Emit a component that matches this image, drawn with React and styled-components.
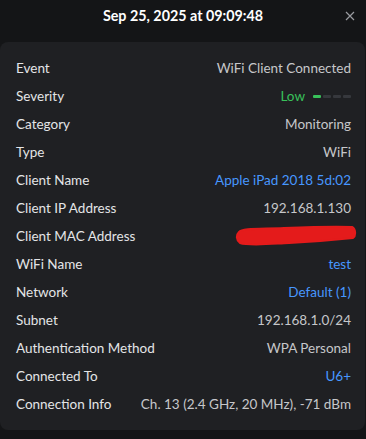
import React from 'react';
import styled, { createGlobalStyle } from 'styled-components';

const GlobalStyle = createGlobalStyle`
  html, body {
    margin: 0;
    padding: 0;
    background: #141517;
  }
  body {
    font-family: Lato, "Noto Sans", sans-serif;
  }
`;

const Page = styled.div`
  width: 366px;
  height: 439px;
  background: #141517;
  display: flex;
  flex-direction: column;
  overflow: hidden;
`;

const Header = styled.div`
  height: 42px;
  display: flex;
  align-items: flex-start;
  justify-content: center;
  position: relative;
`;

const Title = styled.div`
  margin-top: 6px;
  color: #ffffff;
  font-family: Lato, sans-serif;
  font-weight: 700;
  font-size: 14.3px;
  line-height: 20px;
`;

const Close = styled.button`
  position: absolute;
  right: 10px;
  top: 10px;
  width: 12px;
  height: 12px;
  padding: 0;
  border: 0;
  background: transparent;
  display: flex;
  align-items: center;
  justify-content: center;
`;

const Card = styled.div`
  margin: 0 1px 0 0;
  background: #1f2023;
  border-radius: 8px;
  padding: 12px 14px 12px 16px;
  display: flex;
  flex-direction: column;
`;

const Row = styled.div`
  height: 28px;
  display: flex;
  align-items: center;
  justify-content: space-between;
  font-size: 13.5px;
`;

const Label = styled.span`
  color: #e4e5e7;
  font-family: Lato, sans-serif;
`;

const Value = styled.span`
  color: ${(p) => (p.$tone === 'link' ? '#4797ff' : p.$tone === 'ok' ? '#38c15a' : '#c6c7ca')};
  font-family: Lato, sans-serif;
  display: flex;
  align-items: center;
`;

const Meter = styled.span`
  display: flex;
  gap: 2px;
  margin-left: 8px;
`;

const Seg = styled.span`
  width: 8px;
  height: 3px;
  border-radius: 1px;
  background: ${(p) => (p.$on ? '#38c15a' : '#36383d')};
`;

const rows = [
  ['Event', 'WiFi Client Connected'],
  ['Severity', 'Low', 'ok'],
  ['Category', 'Monitoring'],
  ['Type', 'WiFi'],
  ['Client Name', 'Apple iPad 2018 5d:02', 'link'],
  ['Client IP Address', '192.168.1.130'],
  ['Client MAC Address', null, 'redacted'],
  ['WiFi Name', 'test', 'link'],
  ['Network', 'Default (1)', 'link'],
  ['Subnet', '192.168.1.0/24'],
  ['Authentication Method', 'WPA Personal'],
  ['Connected To', 'U6+', 'link'],
  ['Connection Info', 'Ch. 13 (2.4 GHz, 20 MHz), -71 dBm'],
];

const Scribble = () => (
  <svg width="124" height="22" viewBox="0 0 124 22" style={{ marginRight: '-7px' }}>
    <path
      d="M5 7 C 8 3, 25 4, 50 3 S 100 1, 118 2 C 122 4, 122 11, 119 13 C 100 15, 75 17, 55 18 S 15 21, 6 18 C 2 15, 2 10, 5 7 Z"
      fill="#e41b1b"
      stroke="#e41b1b"
      strokeWidth="2"
      strokeLinejoin="round"
    />
  </svg>
);

export default function App() {
  return (
    <Page>
      <GlobalStyle />
      <Header>
        <Title>Sep 25, 2025 at 09:09:48</Title>
        <Close aria-label="close">
          <svg width="10" height="10" viewBox="0 0 10 10">
            <path d="M1 1 L9 9 M9 1 L1 9" stroke="#9a9ba0" strokeWidth="1.2" />
          </svg>
        </Close>
      </Header>
      <Card>
        {rows.map(([label, value, tone], i) => (
          <Row key={i}>
            <Label>{label}</Label>
            {tone === 'redacted' ? (
              <Scribble />
            ) : (
              <Value $tone={tone}>
                {value}
                {tone === 'ok' && (
                  <Meter>
                    <Seg $on />
                    <Seg />
                    <Seg />
                    <Seg />
                  </Meter>
                )}
              </Value>
            )}
          </Row>
        ))}
      </Card>
    </Page>
  );
}
